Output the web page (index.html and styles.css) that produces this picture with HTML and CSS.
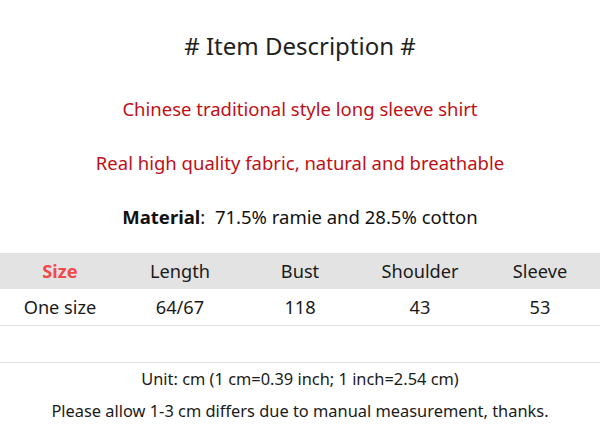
FILE: index.html
```html
<!DOCTYPE html>
<html>
<head>
<meta charset="utf-8">
<link rel="stylesheet" href="styles.css">
</head>
<body>
<div class="page">
  <h1 class="title"># Item Description #</h1>
  <p class="line red">Chinese traditional style long sleeve shirt</p>
  <p class="line red">Real high quality fabric, natural and breathable</p>
  <p class="line material"><b>Material</b>:&nbsp; 71.5% ramie and 28.5% cotton</p>
  <div class="table">
    <div class="row head">
      <div class="cell size">Size</div>
      <div class="cell">Length</div>
      <div class="cell">Bust</div>
      <div class="cell">Shoulder</div>
      <div class="cell">Sleeve</div>
    </div>
    <div class="row body">
      <div class="cell">One size</div>
      <div class="cell">64/67</div>
      <div class="cell">118</div>
      <div class="cell">43</div>
      <div class="cell">53</div>
    </div>
    <div class="row empty"></div>
  </div>
  <p class="note">Unit: cm (1 cm=0.39 inch; 1 inch=2.54 cm)</p>
  <p class="note">Please allow 1-3 cm differs due to manual measurement, thanks.</p>
</div>
</body>
</html>
```
FILE: styles.css
```css
html, body {
  margin: 0;
  padding: 0;
  background: #fff;
}
body {
  font-family: "Noto Sans", "Open Sans", sans-serif;
  color: #1a1a1a;
  width: 600px;
}
.page {
  display: flex;
  flex-direction: column;
  text-align: center;
}
.title {
  margin: 0;
  padding-top: 26px;
  line-height: 40px;
  font-size: 24px;
  font-weight: 400;
  color: #222;
}
.line {
  margin: 0;
  line-height: 54px;
  font-size: 18.5px;
}
.title + .line {
  margin-top: 16px;
}
.red {
  color: #bf0f16;
}
.material {
  color: #111;
}
.material b {
  font-weight: 700;
}
.table {
  margin-top: 9px;
  display: flex;
  flex-direction: column;
}
.row {
  display: grid;
  grid-template-columns: repeat(5, 120px);
  height: 36px;
  align-items: center;
  font-size: 18.2px;
}
.head {
  background: #e3e3e3;
}
.body {
  border-bottom: 1px solid #e0e0e0;
}
.empty {
  height: 36px;
  border-bottom: 1px solid #e0e0e0;
}
.size {
  color: #f04a4a;
  font-weight: 700;
}
.note {
  margin: 0;
  line-height: 32px;
  font-size: 16.4px;
}
```
